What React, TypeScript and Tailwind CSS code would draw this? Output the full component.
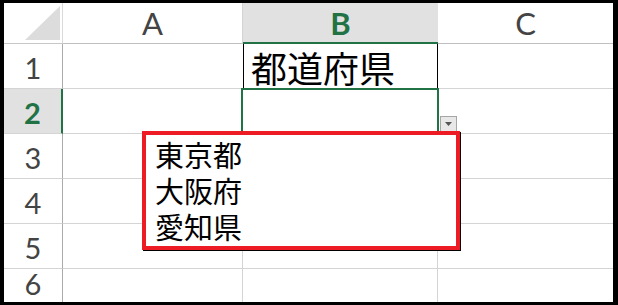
const hdr = "font-['Lato','Liberation_Sans',sans-serif] text-[29px] text-[#444]";
const jp = "font-['Noto_Sans_CJK_JP','Noto_Sans',sans-serif]";

function RowHead({ n, active }: { n: number; active?: boolean }) {
  return (
    <div
      className={`flex items-end justify-center pb-[2px] leading-none border-b border-[#d4d4d4] ${hdr} ${
        active ? "bg-[#e1e1e1] border-r-2 border-r-[#217346] font-bold text-[#217346]" : "border-r border-r-[#ababab]"
      }`}
    >
      <span className="pb-[4px]">{n}</span>
    </div>
  );
}

function Cell({ last }: { last?: boolean }) {
  return <div className={`border-b border-[#d4d4d4] ${last ? "" : "border-r"}`} />;
}

export default function App() {
  const options = ["東京都", "大阪府", "愛知県"];

  return (
    <div className="relative h-[305px] w-[618px] overflow-hidden border-t-[3px] border-b-[3px] border-l-4 border-r-[5px] border-black bg-white">
      <div className="grid grid-cols-[59px_180px_195px_175px] grid-rows-[41px_45px_45px_45px_45px_45px]">
        {/* header row */}
        <div className="relative border-r border-b border-[#dadada] border-b-[#c8c8c8]">
          <svg className="absolute inset-0" width="59" height="41">
            <polygon points="56,3 56,37 21,37" fill="#dcdcdc" />
          </svg>
        </div>
        <div className={`flex items-center justify-center border-r border-b border-[#d4d4d4] border-b-[#c0c0c0] ${hdr} text-[31px]`}>A</div>
        <div className={`flex items-center justify-center border-b-2 border-[#217346] bg-[#e1e1e1] font-bold ${hdr} text-[31px] text-[#217346]`}>
          <span className="pt-[2px]">B</span>
        </div>
        <div className={`flex items-center justify-center border-b border-[#c0c0c0] ${hdr} text-[31px]`}>C</div>

        {/* row 1 */}
        <RowHead n={1} />
        <div className="border-b border-[#d4d4d4]" />
        <div className={`flex items-center border-x border-black pl-[7px] text-[36px] leading-none text-black ${jp}`}>
          都道府県
        </div>
        <Cell last />

        {/* row 2 */}
        <RowHead n={2} active />
        <div className="border-b border-[#d4d4d4]" />
        <div className="relative">
          <div className="absolute -top-px -left-[2px] h-[47px] w-[198px] border-2 border-[#217346]" />
          <div className="absolute top-[27px] left-[197px] flex h-4 w-[17px] items-center justify-center border border-[#a6a6a6] bg-[#e8e8e8]">
            <svg width="7" height="4">
              <polygon points="0,0 7,0 3.5,4" fill="#555" />
            </svg>
          </div>
        </div>
        <Cell last />

        {/* rows 3-6 */}
        {[3, 4, 5, 6].map((n) => (
          <div key={n} className="contents">
            <RowHead n={n} />
            <Cell />
            <Cell />
            <Cell last />
          </div>
        ))}
      </div>

      {/* dropdown list */}
      <div className="absolute top-[128px] left-[138px] h-[119px] w-[318px] border-4 border-[#ed1c24] bg-white shadow-[1px_1px_0_#000]">
        <ul className={`pl-[9px] pt-px text-[29px] leading-none text-black ${jp}`}>
          {options.map((o) => (
            <li key={o} className="flex h-9 items-center">
              {o}
            </li>
          ))}
        </ul>
      </div>
    </div>
  );
}
